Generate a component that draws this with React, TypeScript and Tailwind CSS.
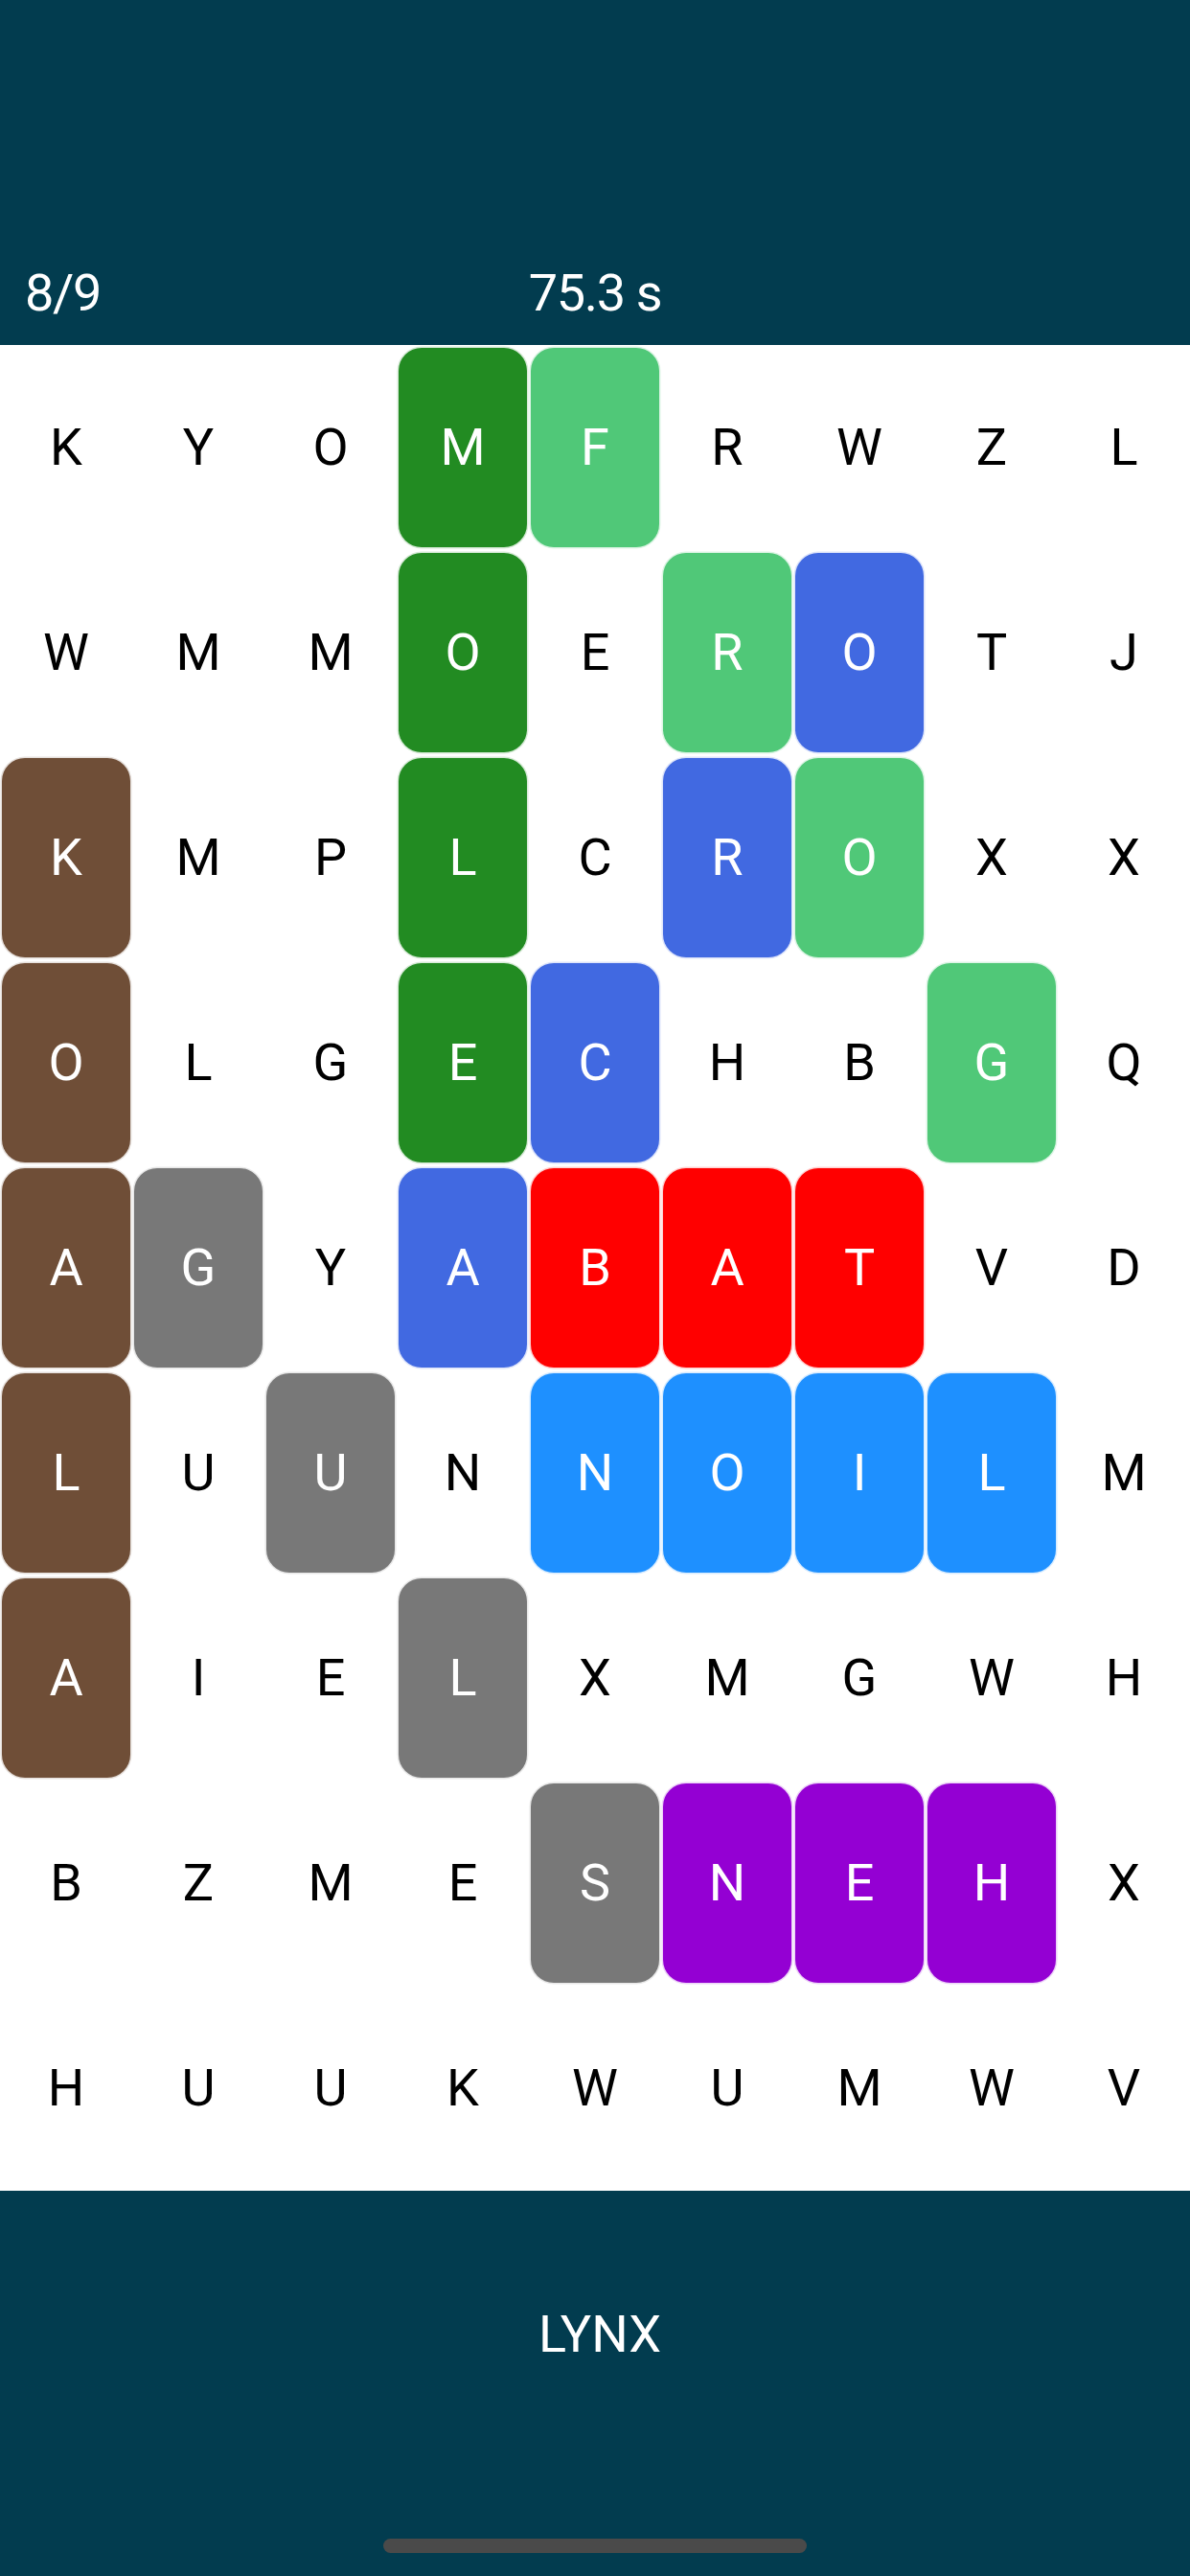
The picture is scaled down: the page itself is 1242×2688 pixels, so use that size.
import React from "react";

type C = "" | "dg" | "lg" | "bl" | "br" | "gy" | "rd" | "db" | "pu";

const rows: string[] = [
  "KYOMFRWZL",
  "WMMOEROTJ",
  "KMPLCROXX",
  "OLGECHBGQ",
  "AGYABATVD",
  "LUUNNOILM",
  "AIELXMGWH",
  "BZMESNEHX",
  "HUUKWUMWV",
];

const colors: C[][] = [
  ["", "", "", "dg", "lg", "", "", "", ""],
  ["", "", "", "dg", "", "lg", "bl", "", ""],
  ["br", "", "", "dg", "", "bl", "lg", "", ""],
  ["br", "", "", "dg", "bl", "", "", "lg", ""],
  ["br", "gy", "", "bl", "rd", "rd", "rd", "", ""],
  ["br", "", "gy", "", "db", "db", "db", "db", ""],
  ["br", "", "", "gy", "", "", "", "", ""],
  ["", "", "", "", "gy", "pu", "pu", "pu", ""],
  ["", "", "", "", "", "", "", "", ""],
];

const tileClass: Record<Exclude<C, "">, string> = {
  dg: "bg-[#228b22] shadow-[0_0_0_1.5px_rgba(34,139,34,0.18)]",
  lg: "bg-[#50c878] shadow-[0_0_0_1.5px_rgba(80,200,120,0.2)]",
  bl: "bg-[#4169e1] shadow-[0_0_0_1.5px_rgba(65,105,225,0.18)]",
  br: "bg-[#6f4e37] shadow-[0_0_0_1.5px_rgba(111,78,55,0.18)]",
  gy: "bg-[#787878] shadow-[0_0_0_1.5px_rgba(120,120,120,0.18)]",
  rd: "bg-[#ff0000] shadow-[0_0_0_1.5px_rgba(255,0,0,0.18)]",
  db: "bg-[#1e90ff] shadow-[0_0_0_1.5px_rgba(30,144,255,0.18)]",
  pu: "bg-[#9400d3] shadow-[0_0_0_1.5px_rgba(148,0,211,0.18)]",
};

const font = { fontFamily: "Roboto, Inter, 'Liberation Sans', sans-serif" };

export default function App() {
  return (
    <div
      className="w-[1242px] h-[2688px] flex flex-col bg-white"
      style={font}
    >
      <header className="h-[360px] bg-[#023c4f] flex flex-col justify-end">
        <div className="h-[108px] grid grid-cols-3 items-center text-white text-[54px] leading-none font-normal tracking-[-0.025em]">
          <div className="pl-[26px]">8/9</div>
          <div className="text-center">75.3 s</div>
          <div />
        </div>
      </header>

      <main className="grid grid-cols-9 grid-rows-9 h-[1926px]">
        {rows.map((row, r) =>
          row.split("").map((ch, c) => {
            const col = colors[r][c];
            return (
              <div key={`${r}-${c}`} className="px-[2px] py-[3px] flex">
                {col ? (
                  <div
                    className={`flex-1 rounded-[24px] flex items-center justify-center text-white text-[54px] leading-none ${tileClass[col]}`}
                  >
                    {ch}
                  </div>
                ) : (
                  <div className="flex-1 flex items-center justify-center text-black text-[54px] leading-none">
                    {ch}
                  </div>
                )}
              </div>
            );
          })
        )}
      </main>

      <footer className="flex-1 bg-[#023c4f] flex flex-col">
        <div className="h-[300px] flex items-center justify-center pl-[10px] text-white text-[54px] leading-none">
          LYNX
        </div>
        <div className="flex-1 flex justify-center pt-[63px]">
          <div className="w-[442px] h-[15px] rounded-full bg-[#4a4a4a]" />
        </div>
      </footer>
    </div>
  );
}
